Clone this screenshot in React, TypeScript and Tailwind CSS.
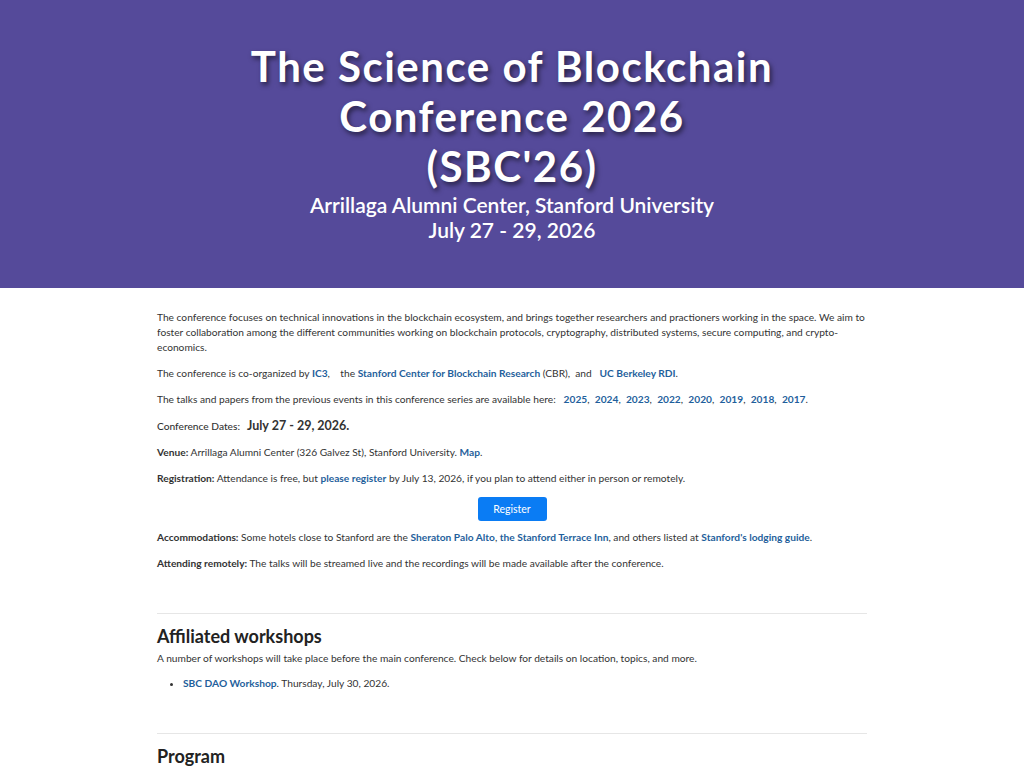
const years = ["2025", "2024", "2023", "2022", "2020", "2019", "2018", "2017"];

const A = ({ children }: { children: React.ReactNode }) => (
  <a href="#" className="font-bold text-[#1f5f9c] no-underline">
    {children}
  </a>
);

const App = () => {
  return (
    <div className="min-h-[768px] bg-white font-['Lato','Noto_Sans',sans-serif] text-[#333]">
      <header className="h-[288px] bg-[#554a9a] flex flex-col items-center pt-[41px] text-white text-center">
        <h1 className="text-[42px] leading-[50px] font-bold tracking-[1.5px] [text-shadow:2px_3px_5px_rgba(0,0,0,0.55)]">
          The Science of Blockchain
          <br />
          Conference 2026
          <br />
          (SBC'26)
        </h1>
        <p className="mt-[1px] text-[21px] leading-[25px] font-semibold">
          Arrillaga Alumni Center, Stanford University
          <br />
          July 27 - 29, 2026
        </p>
      </header>

      <main className="w-[710px] mx-auto pt-[22px] text-[10.2px] leading-[15px]">
        <p className="mb-[11px]">
          The conference focuses on technical innovations in the blockchain ecosystem, and brings together
          researchers and practioners working in the space. We aim to foster collaboration among the different
          communities working on blockchain protocols, cryptography, distributed systems, secure computing, and
          crypto-economics.
        </p>
        <p className="mb-[11px]">
          The conference is co-organized by <A>IC3</A>,&nbsp;&nbsp;&nbsp; the{" "}
          <A>Stanford Center for Blockchain Research</A> (CBR),&nbsp; and&nbsp;&nbsp; <A>UC Berkeley RDI</A>.
        </p>
        <p className="mb-[11px]">
          The talks and papers from the previous events in this conference series are available here:&nbsp;
          {years.map((y, i) => (
            <span key={y}>
              &nbsp;&nbsp;<A>{y}</A>
              {i < years.length - 1 ? "," : "."}
            </span>
          ))}
        </p>
        <p className="mb-[11px] h-[16px] flex items-baseline">
          <span className="font-medium">Conference Dates:</span>
          <span className="ml-[7px] text-[12.5px] font-bold">July 27 - 29, 2026.</span>
        </p>
        <p className="mb-[11px]">
          <b>Venue:</b> Arrillaga Alumni Center (326 Galvez St), Stanford University. <A>Map</A>.
        </p>
        <p className="mb-[11px]">
          <b>Registration:</b> Attendance is free, but <A>please register</A> by July 13, 2026, if you plan to
          attend either in person or remotely.
        </p>
        <div className="flex justify-center mb-[9px]">
          <button className="h-[24px] w-[69px] rounded-[3px] bg-[#0a7cf4] text-white text-[10.5px]">
            Register
          </button>
        </div>
        <p className="mb-[11px]">
          <b>Accommodations:</b> Some hotels close to Stanford are the <A>Sheraton Palo Alto</A>,{" "}
          <A>the Stanford Terrace Inn</A>, and others listed at <A>Stanford's lodging guide</A>.
        </p>
        <p>
          <b>Attending remotely:</b> The talks will be streamed live and the recordings will be made available
          after the conference.
        </p>

        <section className="mt-[42px] border-t border-[#e6e6e6] pt-[10px]">
          <h2 className="text-[18px] leading-[24px] font-bold text-[#222]">Affiliated workshops</h2>
          <p className="mt-[3px]">
            A number of workshops will take place before the main conference. Check below for details on location,
            topics, and more.
          </p>
          <ul className="list-disc pl-[26px] mt-[10px]">
            <li>
              <A>SBC DAO Workshop</A>. Thursday, July 30, 2026.
            </li>
          </ul>
        </section>

        <section className="mt-[42px] border-t border-[#e6e6e6] pt-[10px]">
          <h2 className="text-[18px] leading-[24px] font-bold text-[#222]">Program</h2>
        </section>
      </main>
    </div>
  );
};

export default App;
